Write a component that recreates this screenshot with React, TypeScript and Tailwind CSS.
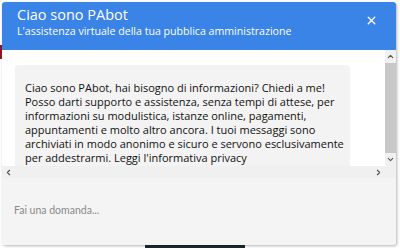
import { X, ChevronUp, ChevronDown, ChevronLeft, ChevronRight } from "lucide-react"

const message =
  "Ciao sono PAbot, hai bisogno di informazioni? Chiedi a me! Posso darti supporto e assistenza, senza tempi di attese, per informazioni su modulistica, istanze online, pagamenti, appuntamenti e molto altro ancora. I tuoi messaggi sono archiviati in modo anonimo e sicuro e servono esclusivamente per addestrarmi. Leggi l'informativa privacy"

export default function App() {
  return (
    <div className="relative w-[400px] h-[248px] bg-white overflow-hidden font-['Open_Sans',sans-serif]">
      {/* page behind the widget */}
      <div className="absolute left-0 top-[45px] w-[2px] h-[14px] bg-[#8b1a2b]" />
      <div className="absolute left-[145px] top-[245px] w-[100px] h-[3px] bg-[#1d2a2e]" />

      <div className="absolute left-[2px] top-[2px] w-[394px] h-[243px] rounded-[3px] bg-white shadow-[1px_1px_3px_rgba(0,0,0,0.3)] overflow-hidden flex flex-col">
        <header className="h-[48px] bg-[#3a83e7] flex items-start justify-between pl-[15px] pr-[18px] pt-[2px] text-white">
          <div className="flex flex-col">
            <span className="text-[14.5px] leading-[21px]">Ciao sono PAbot</span>
            <span className="text-[10.6px] leading-[12px]">
              L'assistenza virtuale della tua pubblica amministrazione
            </span>
          </div>
          <X className="w-[13px] h-[13px] mt-[10px]" strokeWidth={2.5} />
        </header>

        <div className="flex h-[128px]">
          <div className="flex-1 flex flex-col">
            <div className="flex-1 overflow-hidden pl-[13px] pt-[15px]">
              <div className="w-[335px] rounded-[4px] bg-[#f3f3f3] pl-[10px] pr-[4px] pt-[16px] pb-[30px] text-[11px] leading-[14px] text-[#111]">
                {message}
              </div>
            </div>
            <div className="h-[12px] bg-[#f0f0f0] flex items-center justify-between px-[2px] text-[#555]">
              <ChevronLeft className="w-[9px] h-[9px]" strokeWidth={3} />
              <ChevronRight className="w-[9px] h-[9px]" strokeWidth={3} />
            </div>
          </div>
          <div className="w-[11px] bg-[#f0f0f0] flex flex-col items-center text-[#555]">
            <div className="h-[13px] flex items-center">
              <ChevronUp className="w-[9px] h-[9px]" strokeWidth={3} />
            </div>
            <div className="w-full h-[90px] bg-[#c8c8c8]" />
            <div className="flex-1 flex items-center">
              <ChevronDown className="w-[9px] h-[9px]" strokeWidth={3} />
            </div>
            <div className="h-[12px] w-full bg-[#f0f0f0]" />
          </div>
        </div>

        <div className="flex-1 bg-[#f4f4f4] pl-[12px] pt-[18px]">
          <span className="text-[10.5px] text-[#8a8a8a] font-['Lato',sans-serif]">Fai una domanda...</span>
        </div>
      </div>
    </div>
  )
}
